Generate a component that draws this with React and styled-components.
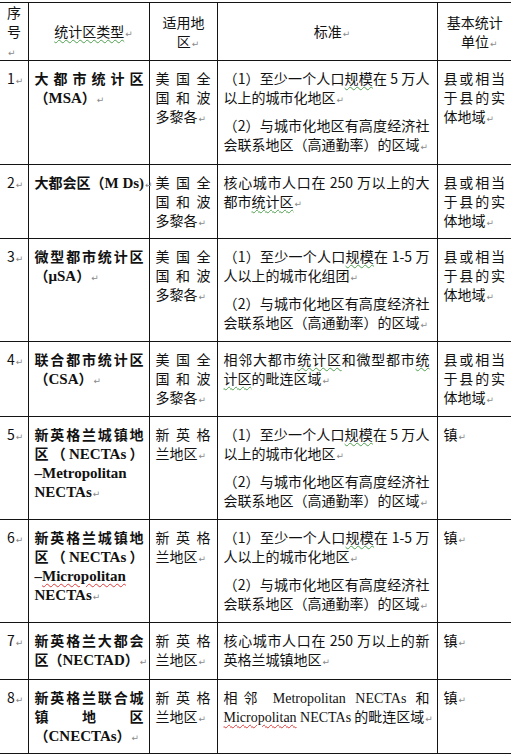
import React from 'react';
import styled, { createGlobalStyle } from 'styled-components';

const GlobalStyle = createGlobalStyle`
  html, body {
    margin: 0;
    padding: 0;
    background: #ffffff;
  }
  body {
    font-family: 'Noto Sans CJK SC', 'Noto Sans', sans-serif;
    color: #111;
  }
`;

const Page = styled.div`
  width: 511px;
  padding-top: 2px;
  overflow: hidden;
`;

const Table = styled.table`
  width: 511px;
  table-layout: fixed;
  border-collapse: collapse;
  font-size: 14px;
  line-height: 19px;
`;

const Row = styled.tr`
  height: ${({ $h }) => $h}px;
`;

const HeadCell = styled.th`
  font-weight: normal;
  text-align: center;
  vertical-align: middle;
  padding: 0 6px 0 7px;
  border: 1px solid #141414;
  &:first-child {
    border-left: none;
    text-align: left;
  }
  &:last-child {
    border-right: none;
  }
`;

const Cell = styled.td`
  vertical-align: top;
  text-align: justify;
  padding: 8px ${({ $pr }) => $pr ?? 6}px 0 6px;
  border: 1px solid #141414;
  &:first-child {
    border-left: none;
    padding-left: 7px;
  }
  &:last-child {
    border-right: none;
  }
`;

const TypeName = styled.div`
  font-weight: bold;
  text-align: justify;
  white-space: ${({ $nowrap }) => ($nowrap ? 'nowrap' : 'normal')};
`;

const Para = styled.p`
  margin: 0;
  text-align: justify;
  & + & {
    margin-top: 9px;
  }
`;

// Word 里西文用 Times，正文 14px，标题列加粗的略大
const Latin = styled.span`
  font-family: 'Liberation Serif', 'Times New Roman', serif;
  font-size: ${({ $size }) => $size ?? 15}px;
  line-height: 1;
`;

const Keep = styled.span`
  white-space: nowrap;
`;

const Wavy = styled.span`
  text-decoration: underline wavy ${({ $red }) => ($red ? '#e03a3a' : '#4fa04f')};
  text-decoration-thickness: 1px;
  text-underline-offset: 2px;
`;

const MarkGlyph = styled.span`
  font-family: 'DejaVu Sans', sans-serif;
  font-weight: normal;
  font-size: 9px;
  line-height: 0;
  color: #8a8a8a;
  padding-left: 1px;
  margin-right: -9px;
  white-space: nowrap;
`;

const Mark = () => <MarkGlyph>↵</MarkGlyph>;

const p2 = '（2）与城市化地区有高度经济社会联系地区（高通勤率）的区域';

const Need = ({ range, end = '地区' }) => (
  <>
    <Para>
      （1）至少一个人口<Wavy>规模</Wavy>在 {range} 万人以上的城市化{end}
      <Mark />
    </Para>
    <Para>
      {p2}
      <Mark />
    </Para>
  </>
);

const us = '美国全国和波多黎各';
const ne = '新英格兰地区';
const county = '县或相当于县的实体地域';

const rows = [
  {
    n: '1',
    h: 104,
    type: (
      <TypeName>
        大都市统计区（<Latin>MSA</Latin>）<Mark />
      </TypeName>
    ),
    area: us,
    std: <Need range="5" />,
    unit: county,
  },
  {
    n: '2',
    h: 74,
    type: (
      <TypeName $nowrap>
        大都会区（<Latin>M Ds)</Latin>
        <Mark />
      </TypeName>
    ),
    area: us,
    std: (
      <Para>
        核心城市人口在 250 万以上的大都市<Wavy>统计区</Wavy>
        <Mark />
      </Para>
    ),
    unit: county,
  },
  {
    n: '3',
    h: 103,
    type: (
      <TypeName>
        微型都市统计区（<Latin>μSA</Latin>）<Mark />
      </TypeName>
    ),
    area: us,
    std: <Need range="1-5" end="组团" />,
    unit: county,
  },
  {
    n: '4',
    h: 75,
    type: (
      <TypeName>
        联合都市统计区（<Latin>CSA</Latin>）<Mark />
      </TypeName>
    ),
    area: us,
    std: (
      <Para>
        相邻大都市<Wavy>统计区</Wavy>和微型都市<Wavy>统计区</Wavy>的毗连区域
        <Mark />
      </Para>
    ),
    unit: county,
  },
  {
    n: '5',
    h: 103,
    type: (
      <TypeName>
        新英格兰城镇地区（<Latin>NECTAs</Latin>）<wbr />
        <Latin>
          <Keep>–Metropolitan</Keep> NECTAs
        </Latin>
        <Mark />
      </TypeName>
    ),
    area: ne,
    std: <Need range="5" />,
    unit: '镇',
  },
  {
    n: '6',
    h: 103,
    type: (
      <TypeName>
        新英格兰城镇地区（<Latin>NECTAs</Latin>）<wbr />
        <Latin>
          <Keep>
            –<Wavy $red>Micropolitan</Wavy>
          </Keep>{' '}
          NECTAs
        </Latin>
        <Mark />
      </TypeName>
    ),
    area: ne,
    std: <Need range="1-5" />,
    unit: '镇',
  },
  {
    n: '7',
    h: 57,
    type: (
      <TypeName>
        新英格兰大都会区（<Latin>NECTAD</Latin>）<Mark />
      </TypeName>
    ),
    area: ne,
    std: (
      <Para>
        核心城市人口在 250 万以上的新英格兰城镇地区
        <Mark />
      </Para>
    ),
    unit: '镇',
  },
  {
    n: '8',
    h: 74,
    type: (
      <TypeName>
        新英格兰联合城镇地区（<Latin>CNECTAs</Latin>）<Mark />
      </TypeName>
    ),
    area: ne,
    std: (
      <Para>
        相邻 <Latin $size={14}>Metropolitan NECTAs</Latin> 和{' '}
        <Latin $size={14}>
          <Wavy $red>Micropolitan</Wavy> NECTAs
        </Latin>{' '}
        的毗连区域
        <Mark />
      </Para>
    ),
    unit: '镇',
  },
];

export default function App() {
  return (
    <Page>
      <GlobalStyle />
      <Table>
        <colgroup>
          <col style={{ width: 28 }} />
          <col style={{ width: 121 }} />
          <col style={{ width: 68 }} />
          <col style={{ width: 220 }} />
          <col style={{ width: 74 }} />
        </colgroup>
        <thead>
          <Row $h={56}>
            <HeadCell>
              序号<Mark />
            </HeadCell>
            <HeadCell>
              <Wavy>统计区类型</Wavy>
              <Mark />
            </HeadCell>
            <HeadCell>
              适用地区<Mark />
            </HeadCell>
            <HeadCell>
              标准<Mark />
            </HeadCell>
            <HeadCell>
              基本统计单位<Mark />
            </HeadCell>
          </Row>
        </thead>
        <tbody>
          {rows.map((r) => (
            <Row key={r.n} $h={r.h}>
              <Cell>
                {r.n}
                <Mark />
              </Cell>
              <Cell $pr={5}>{r.type}</Cell>
              <Cell>
                <Para>
                  {r.area}
                  <Mark />
                </Para>
              </Cell>
              <Cell $pr={7}>{r.std}</Cell>
              <Cell>
                <Para>
                  {r.unit}
                  <Mark />
                </Para>
              </Cell>
            </Row>
          ))}
        </tbody>
      </Table>
    </Page>
  );
}
